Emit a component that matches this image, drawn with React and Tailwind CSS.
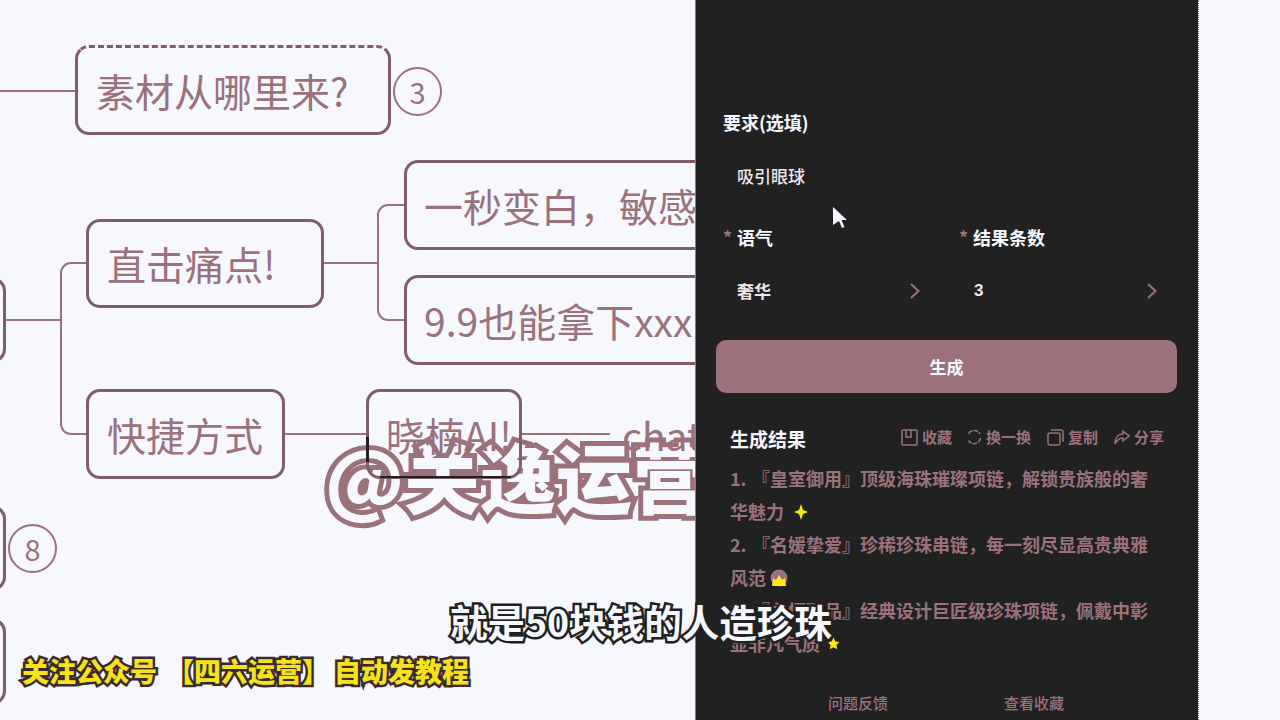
import React from "react";

const cjk = { fontFamily: '"Noto Sans CJK SC", "Liberation Sans", sans-serif' };
const COMMA = "\uFF0C";

function Node({ x, y, w, h, pl = 20, children, className = "" }) {
  return (
    <div
      style={{ left: x, top: y, width: w, height: h, paddingLeft: pl }}
      className={`absolute flex items-center rounded-[14px] border-[3px] border-[#7f5e69] text-[39px] leading-none text-[#9b717c] whitespace-nowrap overflow-hidden ${className}`}
    >
      {children}
    </div>
  );
}

function Badge({ x, y, children }) {
  return (
    <div
      style={{ left: x, top: y }}
      className="absolute flex h-[49px] w-[49px] items-center justify-center rounded-full border-2 border-[#9b717c] text-[29px] text-[#9b717c]"
    >
      {children}
    </div>
  );
}

const Chevron = () => (
  <svg width="10" height="16" viewBox="0 0 10 16" fill="none" stroke="#9b717c" strokeWidth="2">
    <path d="M1 1l7.5 7L1 15" />
  </svg>
);

const Icons = {
  save: (
    <svg width="17" height="17" viewBox="0 0 17 17" fill="none" stroke="#9b717c" strokeWidth="1.5">
      <rect x="1" y="1" width="15" height="15" rx="1" />
      <path d="M5 1v7h5V1" />
    </svg>
  ),
  swap: (
    <svg width="16" height="16" viewBox="0 0 16 16" fill="none" stroke="#9b717c" strokeWidth="1.5">
      <path d="M2.500 5A6.500 6.500 0 0 1 14 5M14.500 9a6.500 6.500 0 0 1-12 2.500" strokeDasharray="5 1" />
    </svg>
  ),
  copy: (
    <svg width="17" height="17" viewBox="0 0 17 17" fill="none" stroke="#9b717c" strokeWidth="1.5">
      <rect x="1" y="4" width="12" height="12" rx="2" />
      <path d="M4 1h10a2 2 0 0 1 2 2v10" />
    </svg>
  ),
  share: (
    <svg width="16" height="16" viewBox="0 0 16 16" fill="none" stroke="#9b717c" strokeWidth="1.5">
      <path d="M9 2l6 5-6 5V9C5 9 3 11 1 15c0-6 3-10 8-10z" />
    </svg>
  ),
};

function Action({ icon, label }) {
  return (
    <div className="flex items-center gap-[4px] text-[15px] font-bold text-[#9b717c]">
      {icon}
      <span>{label}</span>
    </div>
  );
}

const Num = ({ children }) => <span className="inline-block w-[22px]">{children}</span>;

export default function App() {
  return (
    <div style={cjk} className="relative flex h-[720px] w-[1280px] overflow-hidden bg-[#f6f8fe]">
      {/* mind map canvas */}
      <div className="relative h-full w-[695px] shrink-0 overflow-hidden">
        <svg className="absolute left-0 top-0" width="695" height="720" fill="none" stroke="#9b717c" strokeWidth="2">
          <path d="M0 91H76" />
          <path d="M6 320H61" />
          <path d="M86 263H71a10 10 0 0 0-10 10V424a10 10 0 0 0 10 10H86" />
          <path d="M324 263H378" />
          <path d="M404 205H388a10 10 0 0 0-10 10V310a10 10 0 0 0 10 10H404" />
          <path d="M284 434H366" />
          <path d="M521 434H610" />
        </svg>

        <Node x={75} y={45} w={316} h={90} pl={18} className="[border-top-style:dashed]">素材从哪里来?</Node>
        <Badge x={393} y={67}>3</Badge>

        <Node x={404} y={160} w={340} h={90} pl={17}>一秒变白{COMMA}敏感肌</Node>
        <Node x={86} y={219} w={238} h={89} pl={18}>直击痛点!</Node>
        <Node x={404} y={275} w={340} h={90} pl={17}>9.9也能拿下xxx</Node>

        <Node x={-60} y={277} w={66} h={86}> </Node>

        <Node x={86} y={389} w={199} h={90} pl={18}>快捷方式</Node>

        <Node x={-60} y={505} w={66} h={86}> </Node>
        <Badge x={8} y={524}>8</Badge>
        <Node x={-60} y={618} w={66} h={87}> </Node>

        {/* watermark */}
        <div className="absolute left-[325px] top-[420px] whitespace-nowrap text-[76px] font-black leading-[110px] text-[#f6f8fe] [-webkit-text-stroke:10px_#9b717c] [paint-order:stroke_fill]">
          @关逸运营
        </div>

        {/* nodes seen through the watermark */}
        <Node x={366} y={389} w={156} h={90} pl={17}>晓楠AI!</Node>
        <div className="absolute left-[622px] top-[411px] text-[39px] leading-[46px] text-[#9b717c]">chatgpt</div>
        <div className="absolute left-[380px] top-[476px] h-[2px] w-[131px] bg-[#212121]" />
        <div className="absolute left-[366px] top-[437px] h-[25px] w-[3px] bg-[#212121]" />
      </div>

      {/* dark panel */}
      <div className="flex h-full w-[503px] shrink-0 flex-col border-l border-[#9b717c] bg-[#212121] pt-[110px]">
        <div className="h-[24px] pl-[27px] text-[18px] font-bold leading-[24px] text-[#f6f8fe]">要求(选填)</div>
        <div className="flex h-[84px] items-center pl-[41px] text-[17px] font-medium text-[#f0e6ea]">吸引眼球</div>

        <div className="grid h-[38px] grid-cols-[236px_1fr] items-center pl-[27px] text-[18px] font-bold leading-none text-[#f6f8fe]">
          <div className="flex items-center"><span className="w-[14px] text-[#9b717c]">*</span>语气</div>
          <div className="flex items-center"><span className="w-[14px] text-[#9b717c]">*</span>结果条数</div>
        </div>

        <div className="grid h-[70px] grid-cols-[237px_1fr] items-center pl-[41px] text-[17px] font-bold text-[#f0e6ea]">
          <div className="flex items-center justify-between">
            <span>奢华</span>
            <span className="mr-[54px] flex"><Chevron /></span>
          </div>
          <div className="flex items-center justify-between">
            <span className="text-[17px]" style={{ fontFamily: '"Liberation Sans", sans-serif' }}>3</span>
            <span className="mr-[41px] flex"><Chevron /></span>
          </div>
        </div>

        <div className="ml-[20px] mr-[21px] mt-[14px] flex h-[53px] items-center justify-center rounded-[10px] bg-[#9b717c] text-[17px] font-bold text-[#f6f8fe]">
          生成
        </div>

        <div className="mt-[22px] flex h-[44px] items-center justify-between pl-[34px] pr-[34px]">
          <div className="pt-[4px] text-[19px] font-bold text-[#f6f8fe]">生成结果</div>
          <div className="flex items-center gap-[16px]">
            <div className="flex items-center gap-[14px]">
              <Action icon={Icons.save} label="收藏" />
              <Action icon={Icons.swap} label="换一换" />
            </div>
            <Action icon={Icons.copy} label="复制" />
            <Action icon={Icons.share} label="分享" />
          </div>
        </div>

        <div className="mt-[3px] whitespace-nowrap pl-[34px] text-[18px] font-bold leading-[33px] text-[#9b717c]">
          <div><Num>1.</Num>『皇室御用』顶级海珠璀璨项链{COMMA}解锁贵族般的奢</div>
          <div className="flex items-center">
            华魅力
            <svg className="ml-[10px]" width="14" height="16" viewBox="0 0 14 16" fill="#ffe81a">
              <path d="M7 0l2 6 5 2-5 2-2 6-2-6-5-2 5-2z" />
            </svg>
          </div>
          <div><Num>2.</Num>『名媛挚爱』珍稀珍珠串链{COMMA}每一刻尽显高贵典雅</div>
          <div className="flex items-center">
            风范
            <svg className="ml-[4px]" width="18" height="20" viewBox="0 0 18 20">
              <circle cx="9" cy="10" r="8.500" fill="#9b717c" />
              <path d="M2 18l1-8 3 2 3-5 3 5 3-2 1 8z" fill="#ffe81a" />
            </svg>
          </div>
          <div><Num>3.</Num>『永恒臻品』经典设计巨匠级珍珠项链{COMMA}佩戴中彰</div>
          <div className="flex items-center">
            显非凡气质
            <svg className="ml-[7px]" width="13" height="13" viewBox="0 0 24 24" fill="#ffe81a">
              <path d="M12 1l3.400 7.200 7.600 1-5.600 5.400 1.500 8L12 18.700l-6.900 3.900 1.500-8L1 9.200l7.600-1z" />
            </svg>
          </div>
        </div>

        <div className="mt-[27px] flex h-[32px] items-center gap-[116px] pl-[132px] text-[15px] font-medium text-[#9b717c]">
          <span>问题反馈</span>
          <span>查看收藏</span>
        </div>
      </div>

      {/* right strip */}
      <div className="h-full flex-1 border-l border-dotted border-[#9b717c] bg-[#f6f8fe]" />

      {/* pointer */}
      <svg className="absolute left-[833px] top-[207px]" width="15" height="21" viewBox="0 0 15 21" fill="#f6f8fe">
        <path d="M0 0l14 13H8.500l3 7-2.500 1-3-7L0 18z" />
      </svg>

      {/* captions */}
      <div className="absolute left-[450px] top-[594px] whitespace-nowrap text-[37.500px] font-bold leading-[54px] text-[#f6f8fe] [-webkit-text-stroke:5px_#212121] [paint-order:stroke_fill]">
        就是50块钱的人造珍珠
      </div>
      <div className="absolute left-[22px] top-[650px] flex whitespace-nowrap text-[27px] font-black leading-[42px] text-[#f5e31a] [-webkit-text-stroke:5px_#3a2a30] [paint-order:stroke_fill]">
        <span>关注公众号</span>
        <span className="ml-[10px]">【四六运营】</span>
        <span className="ml-[5px]">自动发教程</span>
      </div>
    </div>
  );
}
